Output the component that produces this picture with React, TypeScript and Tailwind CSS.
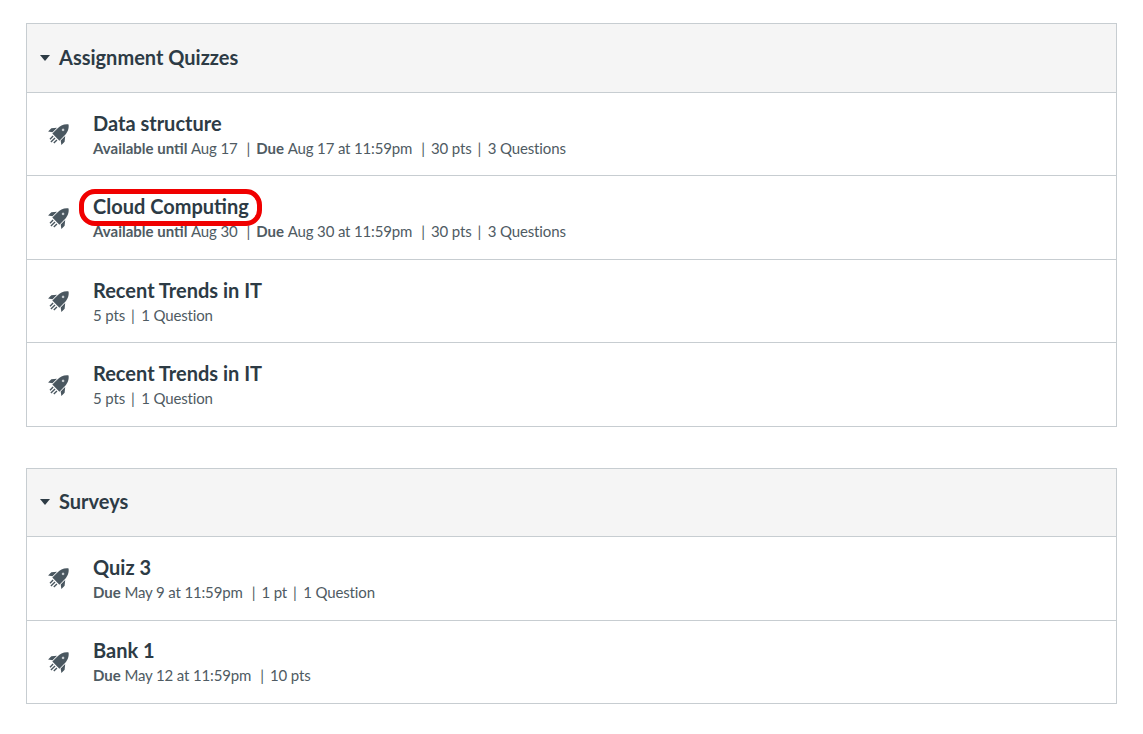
import React from "react";

function Rocket() {
  return (
    <svg width="22" height="22" viewBox="0 0 22 22" className="shrink-0" fill="#4a5760">
      <g transform="translate(11.4 10.6) rotate(45)">
        <path d="M0 -13C3.8 -10 5 -6 5 -1.5L5 5L-5 5L-5 -1.5C-5 -6 -3.8 -10 0 -13z" />
        <path d="M-5.8 -2.4L-9.4 2L-9.4 6.6L-5.8 4zM5.8 -2.4L9.4 2L9.4 6.6L5.8 4z" />
        <circle cx="0" cy="-5.2" r="1.3" fill="#c9ced2" />
        <path d="M-3.4 6.2H-2V10.6H-3.4zM-.7 6.2H.7V12H-.7zM2 6.2H3.4V10.6H2z" />
      </g>
    </svg>
  );
}

type Seg = { b?: string; t?: string };

function Row({ title, segs, boxed }: { title: string; segs: Seg[]; boxed?: boolean }) {
  return (
    <div className="flex h-[83.5px] items-center border-b border-[#c7cdd1] last:h-[82.5px] last:border-b-0">
      <div className="flex w-[66px] shrink-0 pl-[21px]">
        <Rocket />
      </div>
      <div className="flex flex-col pt-[1px]">
        <div className="relative h-[24px] text-[20px] leading-[24px] font-bold text-[#2d3b45]">
          {title}
          {boxed && (
            <div className="absolute top-[-5.5px] left-[-14px] h-[37px] w-[183px] rounded-[16px] border-[5px] border-[#f00000]" />
          )}
        </div>
        <div className="mt-[3px] flex h-[21px] items-center text-[15px] leading-[21px] whitespace-pre text-[#4f5b63]">
          {segs.map((s, i) => (
            <React.Fragment key={i}>
              {i > 0 && (
                <span className={segs[i - 1].b ? "pr-[6px] pl-[9px]" : "pr-[6.5px] pl-[6px]"}>|</span>
              )}
              {s.b && <span className="font-bold">{s.b} </span>}
              {s.t && <span className="tracking-[-0.15px]">{s.t}</span>}
            </React.Fragment>
          ))}
        </div>
      </div>
    </div>
  );
}

function Group({ title, children }: { title: string; children: React.ReactNode }) {
  return (
    <section className="border border-[#c7cdd1]">
      <div className="flex h-[68.5px] items-center border-b border-[#c7cdd1] bg-[#f5f5f5] pb-[3px] pl-[13px]">
        <svg width="10" height="6" viewBox="0 0 10 6" className="mt-[3px] mr-[9px]" fill="#2d3b45">
          <path d="M0 0h10L5 6z" />
        </svg>
        <h2 className="text-[20px] leading-[24px] font-bold text-[#2d3b45]">{title}</h2>
      </div>
      {children}
    </section>
  );
}

export default function App() {
  return (
    <div className="flex min-h-[734px] flex-col gap-[40.8px] bg-white pt-[23.4px] pr-[26px] pl-[26px] font-['Lato','Liberation_Sans',sans-serif]">
      <Group title="Assignment Quizzes">
        <Row
          title="Data structure"
          segs={[
            { b: "Available until", t: "Aug 17" },
            { b: "Due", t: "Aug 17 at 11:59pm" },
            { t: "30 pts" },
            { t: "3 Questions" },
          ]}
        />
        <Row
          boxed
          title="Cloud Computing"
          segs={[
            { b: "Available until", t: "Aug 30" },
            { b: "Due", t: "Aug 30 at 11:59pm" },
            { t: "30 pts" },
            { t: "3 Questions" },
          ]}
        />
        <Row title="Recent Trends in IT" segs={[{ t: "5 pts" }, { t: "1 Question" }]} />
        <Row title="Recent Trends in IT" segs={[{ t: "5 pts" }, { t: "1 Question" }]} />
      </Group>
      <Group title="Surveys">
        <Row
          title="Quiz 3"
          segs={[{ b: "Due", t: "May 9 at 11:59pm" }, { t: "1 pt" }, { t: "1 Question" }]}
        />
        <Row title="Bank 1" segs={[{ b: "Due", t: "May 12 at 11:59pm" }, { t: "10 pts" }]} />
      </Group>
    </div>
  );
}
